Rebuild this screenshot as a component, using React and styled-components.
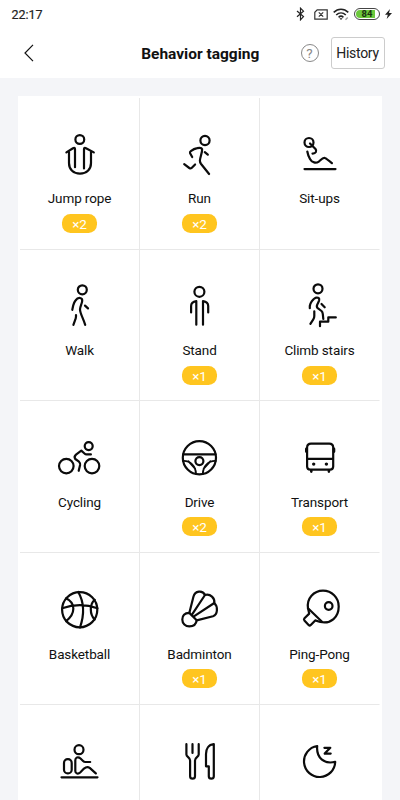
import styled, { createGlobalStyle } from "styled-components";

const GlobalStyle = createGlobalStyle`
    * {
        box-sizing: border-box;
    }

    body {
        margin: 0;
        background: #f4f5f8;
        font-family: Roboto, "Noto Sans", sans-serif;
        color: #111;
    }
`;

const icons = {
    jumpRope: (
        <>
            <circle cx="24.3" cy="8.5" r="4.4" />
            <path d="M10.9 21.4 L17.5 17.2 Q19.5 16.2 19.5 18.3 V36.2 M28.5 37.4 V18.3 Q28.5 16.2 30.5 17.2 L38.3 21.4" />
            <path d="M13.5 21 V32 C13.5 38.5 18 42.6 24.5 42.6 S35.5 38.5 35.5 32 V21" />
        </>
    ),
    run: (
        <>
            <circle cx="29.5" cy="9.5" r="4.6" />
            <path d="M16.7 26 L14.6 22.3 Q14.1 21 15.3 20.2 Q18.5 17.7 21.8 17.2 Q26 16.3 26.6 18.2 C27 21 24.6 26 24.4 29.5 Q24.4 31.3 25.4 32.7 L33.6 43" />
            <path d="M29.3 21.2 L32.3 23.7 M8.7 33.2 L13.8 37 Q15.1 37.8 16.1 37 L19.6 33.5" />
        </>
    ),
    sitUps: (
        <>
            <circle cx="13.5" cy="11.5" r="4.5" />
            <path d="M14.5 12.5 L20 18 Q21.2 19.5 20.4 21 Q19.4 22.7 17 22.6" />
            <path d="M11.8 20.5 Q12.5 24.5 14.5 28 C16.5 31.8 20.5 32.5 23.3 30.6 C25.5 28.8 27.3 26.2 29.4 27 Q31 27.5 36.4 32.2 M9 38.1 H40" />
        </>
    ),
    walk: (
        <>
            <circle cx="26.8" cy="6.8" r="4.5" />
            <path d="M16.8 26.8 L17.7 22.5 Q18.3 19.7 20 17.5 Q22 14.7 24.5 15 Q27 15.3 26.7 18 C26.3 21 24.5 23.5 24.5 26.5 C24.6 30.5 27.6 35 29.7 41.9" />
            <path d="M29.5 22.6 L32.5 25.4 M20.5 32 V33.5 Q20.4 35.5 19.5 37.3 L17.9 41.9" />
        </>
    ),
    stand: (
        <>
            <circle cx="23.9" cy="8.8" r="5" />
            <path d="M15.6 29.5 V23 Q15.6 18.8 20.8 18.1 V41.7 M32.7 29.5 V23 Q32.7 18.8 27.5 18.1 V41.7" />
        </>
    ),
    stairs: (
        <>
            <circle cx="22.5" cy="5.8" r="4.5" />
            <path d="M14.3 25.2 V23 Q14.6 20.5 16.2 18.3 Q18.8 14.7 21.3 14.5 Q24.3 14.5 23.6 17.3 Q22.9 19.5 21.8 21.5 Q20.7 23.8 22.2 25.1 L26 28 Q27.1 29 27.3 31 L27.8 36" />
            <path d="M26 21 L29.2 24.3 M18.8 28.3 V33 Q18.8 34.8 17.8 36.3 L14.9 40.8" />
            <path d="M24.5 43.2 V38.7 H32.8 V34.4 H40.3" />
        </>
    ),
    cycling: (
        <>
            <circle cx="10.8" cy="31.1" r="7.3" />
            <circle cx="36.5" cy="31.1" r="7.3" />
            <circle cx="33.2" cy="11.1" r="4" />
            <path d="M35.4 19.4 H31 Q29.9 19.4 29 18.5 L25.8 15.7 L20.5 19.6 Q18.1 21.7 19.8 24 L23.5 26.7 Q24.9 28 24.6 30 L23.2 35.8" />
        </>
    ),
    drive: (
        <>
            <circle cx="23.9" cy="22.8" r="16.6" />
            <circle cx="23.9" cy="26.1" r="4" />
            <path d="M7.8 19.4 H40" />
            <path d="M7.7 25.9 C14.5 25.6 20.4 31 20.5 39 M40.1 25.9 C33.3 25.6 27.4 31 27.3 39 M12.8 26.2 L19.6 33.6 M35 26.2 L28.2 33.6" strokeWidth="1.9" />
        </>
    ),
    transport: (
        <>
            <path d="M11.6 12.3 Q11.8 8.7 15.5 8.7 H33.8 Q37.5 8.7 37.7 12.3 V31.5 Q37.6 34.7 34.6 34.7 H14.7 Q11.7 34.7 11.6 31.5 Z M11.6 23.8 H37.7" />
            <path d="M10.8 13.9 V16.6 M38.5 13.9 V16.6 M15.8 35.5 V36.6 M33.4 35.5 V36.6" strokeWidth="2.6" />
            <circle cx="18.2" cy="29.1" r="1.7" fill="#0b0b0b" stroke="none" />
            <circle cx="30.9" cy="29.1" r="1.7" fill="#0b0b0b" stroke="none" />
        </>
    ),
    basketball: (
        <>
            <circle cx="24.2" cy="22.7" r="17.6" />
            <path d="M22.8 5 C28.5 15 28.8 28 24.5 40.5 M6.6 21.2 Q24.5 15.2 42 21.2" />
            <path d="M10.5 11.3 C20.5 16 20 27 10.6 34 M39.2 12.8 C34 17 34 27.5 39.2 32.6" />
        </>
    ),
    badminton: (
        <>
            <path d="M13.8 25.9 L18 9.5 C19.5 3.8 27 2.8 29.5 8 C35 6.6 39.5 11 38.8 16 C42.5 19.5 42.5 27.5 37.5 29.3 L21.2 33.4" />
            <path d="M16.8 27.2 L29.5 8 M18.4 29.3 L38.8 16" />
            <path d="M13.8 25.9 C9 25.8 6.8 29 6.8 32.5 C6.8 36.5 10 39.4 13.8 39.4 C18 39.4 20.8 37 21.2 33.2 Z" />
        </>
    ),
    pingPong: (
        <>
            <path d="M12.5 21.3 C11 11.5 18.3 3.7 27.5 3.7 C36.3 3.7 43.2 10.7 43.2 19.5 C43.2 30.2 35.5 37.3 24.8 35 L19.7 33.4 L15.3 38 Q14.2 39 13.1 38 L8.9 33.4 Q8 32.4 9 31.3 L13.7 26.6 Z" />
            <path d="M12.5 21.3 L26.5 34.8" />
            <circle cx="33.2" cy="19" r="3.8" />
        </>
    ),
    office: (
        <>
            <circle cx="23.5" cy="11.7" r="4.5" />
            <rect x="8.5" y="21.2" width="7.7" height="14.2" rx="3.7" />
            <path d="M34.7 24 H30 Q28.5 24 27.3 22.7 L25 20.5 C22.5 18.4 19.8 19.5 19.8 22.3 V33 C19.8 35.7 22.7 36.4 24.7 34.5 L28.5 30.6 Q31.5 28 34.2 29.8 Q36.5 31.8 40.3 35.4 M6 39.3 H42" />
        </>
    ),
    eat: (
        <>
            <path d="M10.9 6.2 V16.5 C10.9 19 14.6 19.5 14.6 22.5 V38.2 C14.6 41.5 19.5 41.5 19.5 38.2 V22.5 C19.5 19.5 23.2 19 23.2 16.5 V6.2 M17 6.2 V15" />
            <path d="M38.3 6.2 V38.2 C38.3 41.5 33.3 41.5 33.3 38.2 V28.3 H30.5 V16 C30.5 11 33 6.7 38.3 6.2 Z" />
        </>
    ),
    sleep: (
        <>
            <path d="M21.7 8 A15.6 15.6 0 1 0 39.7 23.8 C29.5 26.5 20.5 20.5 21.7 8 Z" />
            <path d="M28.9 9.8 H34.8 L29.2 15.6 H35.2" />
        </>
    ),
};

const activities = [
    { name: "Jump rope", icon: "jumpRope", count: 2 },
    { name: "Run", icon: "run", count: 2 },
    { name: "Sit-ups", icon: "sitUps" },
    { name: "Walk", icon: "walk" },
    { name: "Stand", icon: "stand", count: 1 },
    { name: "Climb stairs", icon: "stairs", count: 1 },
    { name: "Cycling", icon: "cycling" },
    { name: "Drive", icon: "drive", count: 2 },
    { name: "Transport", icon: "transport", count: 1 },
    { name: "Basketball", icon: "basketball" },
    { name: "Badminton", icon: "badminton", count: 1 },
    { name: "Ping-Pong", icon: "pingPong", count: 1 },
    { icon: "office" },
    { icon: "eat" },
    { icon: "sleep" },
];

function StatusIcons() {
    return (
        <StatusGroup>
            <svg width="9" height="14" viewBox="0 0 9 14" fill="none" stroke="#222" strokeWidth="1.2">
                <path d="M1 4 L7.5 9.6 L4.5 12.8 V1.2 L7.5 4.2 L1 9.8" />
            </svg>
            <svg width="14" height="11" viewBox="0 0 14 11" fill="none" stroke="#333" strokeWidth="1.2">
                <path d="M3.2 .8 H13.2 V10.2 H.8 V3.3 Z M4.8 3.3 L9.2 7.7 M9.2 3.3 L4.8 7.7" />
            </svg>
            <svg width="16" height="13" viewBox="0 0 16 13" fill="none" stroke="#222" strokeWidth="1.6">
                <path d="M.7 4.4 C5 .2 11 .2 15.3 4.4 M3.2 7 C6 4.3 10 4.3 12.8 7 M5.6 9.3 C7 8 9 8 10.4 9.3" />
                <path d="M6.4 10.3 H9.6 L8 12 Z" fill="#222" stroke="none" />
                <path d="M12.5 11.7 L14.7 9.5" stroke="#999" strokeWidth="1.3" />
            </svg>
            <Battery>
                <span>84</span>
            </Battery>
            <svg width="7" height="10" viewBox="0 0 7 10" fill="#222">
                <path d="M5 0 L0 5.7 H2.8 L1.7 10 L7 3.9 H4 Z" />
            </svg>
        </StatusGroup>
    );
}

function App() {
    return (
        <Screen>
            <GlobalStyle />
            <StatusBar>
                <time>22:17</time>
                <StatusIcons />
            </StatusBar>
            <Header>
                <BackButton aria-label="Back">
                    <svg width="10" height="18" viewBox="0 0 10 18" fill="none" stroke="#111" strokeWidth="1.2">
                        <path d="M9 .8 L1 9 L9 17.2" />
                    </svg>
                </BackButton>
                <Title>Behavior tagging</Title>
                <Actions>
                    <HelpButton>?</HelpButton>
                    <HistoryButton>History</HistoryButton>
                </Actions>
            </Header>
            <Card>
                <Grid>
                    {activities.map((item) => (
                        <Cell key={item.icon}>
                            <Icon viewBox="0.5 0 48 48">{icons[item.icon]}</Icon>
                            {item.name && <Label>{item.name}</Label>}
                            {item.count && <Badge>×{item.count}</Badge>}
                        </Cell>
                    ))}
                </Grid>
            </Card>
        </Screen>
    );
}

const Screen = styled.div`
    width: 400px;
    height: 800px;
    overflow: hidden;
    background: #f4f5f8;
`;

const StatusBar = styled.div`
    display: flex;
    justify-content: space-between;
    align-items: center;
    height: 28px;
    padding: 0 8px 0 11.5px;
    background: #fff;

    time {
        font-size: 12.5px;
        line-height: 28px;
        padding-top: 1px;
        color: #222;
        -webkit-text-stroke: 0.2px #222;
    }
`;

const StatusGroup = styled.div`
    display: flex;
    align-items: center;
    gap: 5px;

    svg:first-child {
        margin-right: 4px;
    }
`;

const Battery = styled.div`
    display: flex;
    width: 26px;
    height: 12px;
    padding: 1px;
    border: 1px solid #444;
    border-radius: 6px;

    span {
        flex: 1;
        border-radius: 4px;
        background: linear-gradient(to right, #6cc93c 86%, #fff 86%);
        color: #1a3310;
        font-size: 9.5px;
        font-weight: 700;
        line-height: 8.5px;
        text-align: center;
    }
`;

const Header = styled.header`
    display: grid;
    grid-template-columns: 1fr auto 1fr;
    align-items: center;
    height: 50px;
    padding: 0 15.5px 0 24px;
    background: #fff;
`;

const BackButton = styled.button`
    display: flex;
    width: 30px;
    padding: 0;
    border: none;
    background: none;
`;

const Title = styled.h1`
    margin: 1px 4px 0 -4px;
    font-size: 15.5px;
    font-weight: 700;
    line-height: 20px;
    white-space: nowrap;
    color: #111;
`;

const Actions = styled.div`
    display: flex;
    align-items: center;
    justify-content: flex-end;
    gap: 12px;
`;

const HelpButton = styled.button`
    width: 18px;
    height: 18px;
    padding: 0;
    border: 1px solid #888;
    border-radius: 50%;
    background: none;
    color: #888;
    font: 13.5px/17px Roboto, sans-serif;
`;

const HistoryButton = styled.button`
    width: 54px;
    height: 32px;
    padding: 0;
    border: 1px solid #ccc;
    border-radius: 3px;
    background: #fff;
    color: #222;
    font: 14px/30px Roboto, sans-serif;
    letter-spacing: -0.3px;
`;

const Card = styled.main`
    width: 364px;
    height: 740px;
    margin: 17.5px auto 0;
    padding: 2.4px 2px 0;
    background: #fff;
`;

const Grid = styled.div`
    display: grid;
    grid-template-columns: repeat(3, 120px);
    grid-auto-rows: 151.7px;
`;

const Cell = styled.div`
    display: flex;
    flex-direction: column;
    align-items: center;
    padding-top: 33.6px;
    border-right: 1px solid #e8e8e8;
    border-bottom: 1px solid #e8e8e8;

    &:nth-child(3n) {
        border-right-color: transparent;
    }
`;

const Icon = styled.svg`
    flex: none;
    width: 48px;
    height: 48px;
    fill: none;
    stroke: #0b0b0b;
    stroke-width: 2.2;
    stroke-linecap: round;
    stroke-linejoin: round;
`;

const Label = styled.div`
    margin-top: 10px;
    font-size: 13.5px;
    letter-spacing: -0.12px;
    line-height: 18px;
    color: #111;
`;

const Badge = styled.div`
    width: 35.5px;
    height: 19px;
    margin-top: 6.4px;
    border-radius: 8.5px;
    background: #ffc51f;
    color: #fff;
    font-size: 13.5px;
    letter-spacing: -0.2px;
    line-height: 20px;
    text-align: center;
`;

export default App;
